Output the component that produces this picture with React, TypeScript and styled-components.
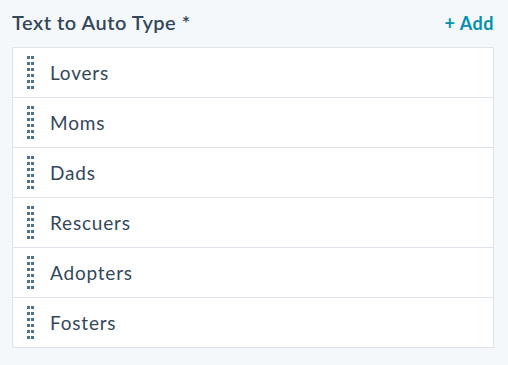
import React from 'react';
import styled, {createGlobalStyle} from 'styled-components';

const GlobalStyle = createGlobalStyle`
  html, body {
    margin: 0;
    padding: 0;
    background: #f5f8fa;
  }
  body {
    font-family: Lato, "Noto Sans", sans-serif;
    color: #33475b;
  }
`;

const Panel = styled.div`
  width: 508px;
  height: 365px;
  box-sizing: border-box;
  padding: 9px 14px 0 12px;
  background: #f5f8fa;
`;

const Header = styled.div`
  display: flex;
  justify-content: space-between;
  align-items: baseline;
  height: 38px;
`;

const Title = styled.label`
  font-size: 20px;
  font-weight: 600;
  line-height: 26px;
  letter-spacing: 0.5px;
  color: #33475b;
`;

const AddButton = styled.button`
  border: none;
  background: none;
  padding: 0;
  font-family: inherit;
  font-size: 18px;
  font-weight: 700;
  line-height: 26px;
  letter-spacing: 0.5px;
  color: #0091ae;
  cursor: pointer;
`;

const List = styled.ul`
  list-style: none;
  margin: 0;
  padding: 0;
  background: #fff;
  border: 1px solid #dfe3eb;
`;

const Item = styled.li<{ $last?: boolean }>`
  display: flex;
  align-items: center;
  height: 49px;
  padding-left: 14px;
  border-bottom: ${p => (p.$last ? 'none' : '1px solid #dfe3eb')};
  font-size: 19px;
  letter-spacing: 0.8px;
  color: #33475b;
`;

const Grip = styled.span`
  display: grid;
  grid-template-columns: repeat(2, 3px);
  grid-auto-rows: 3px;
  column-gap: 1px;
  row-gap: 3px;
  margin-right: 16px;

  > i {
    background: #516f90;
  }
`;

const words = ['Lovers', 'Moms', 'Dads', 'Rescuers', 'Adopters', 'Fosters'];

function DragHandle() {
  return (
    <Grip>
      {Array.from({length: 12}).map((_, i) => <i key={i}/>)}
    </Grip>
  );
}

export default function App() {
  return (
    <Panel>
      <GlobalStyle/>
      <Header>
        <Title>Text to Auto Type *</Title>
        <AddButton>+ Add</AddButton>
      </Header>
      <List>
        {words.map((w, i) =>
          <Item key={w} $last={i === words.length - 1}>
            <DragHandle/>
            {w}
          </Item>
        )}
      </List>
    </Panel>
  );
}
